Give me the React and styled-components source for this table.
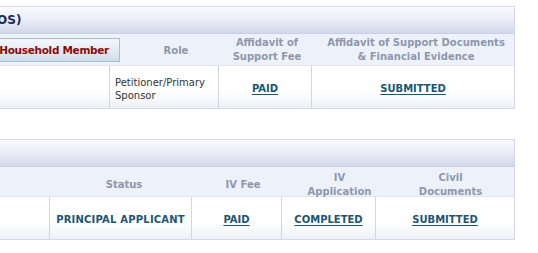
import styled, { createGlobalStyle } from 'styled-components';

const GlobalStyle = createGlobalStyle`
  html, body {
    margin: 0;
    padding: 0;
    background: #ffffff;
    overflow: hidden;
  }
  body {
    font-family: "DejaVu Sans", Verdana, sans-serif;
  }
`;

const Page = styled.div`
  width: 538px;
  height: 253px;
  padding-top: 6px;
  box-sizing: border-box;
  display: flex;
  flex-direction: column;
  gap: 30px;
`;

const Panel = styled.section`
  margin-left: -200px;
  width: 715px;
  border: 1px solid #d3d9ea;
  box-sizing: border-box;
`;

const TitleBar = styled.div`
  height: 26px;
  display: flex;
  align-items: center;
  padding-left: ${(p) => p.$indent}px;
  background: linear-gradient(to bottom, #fbfbfe 0%, #eef0f8 40%, #d2d8ea 100%);
  border-bottom: 1px solid #c8d0e4;
  color: #1c2a58;
  font-size: 12px;
  font-weight: bold;
  white-space: nowrap;
`;

const HeadRow = styled.div`
  display: grid;
  grid-template-columns: ${(p) => p.$cols};
  height: ${(p) => p.$height}px;
  align-items: center;
  background: #edf1fa;
  border-bottom: 1px solid #dfe4f0;
`;

const HeadCell = styled.div`
  text-align: center;
  padding-top: ${(p) => p.$drop || 0}px;
  padding-left: ${(p) => p.$shift || 0}px;
  color: #8e98ac;
  font-size: 10px;
  font-weight: bold;
  line-height: 14px;
`;

const SortButton = styled.button`
  justify-self: end;
  height: 24px;
  padding: 0 10px;
  border: 1px solid #a9bed4;
  background: linear-gradient(to bottom, #f3f7fb 0%, #e2ebf4 55%, #cddceb 100%);
  color: #8b0b0b;
  font-family: inherit;
  font-size: 10.5px;
  letter-spacing: -0.3px;
  font-weight: bold;
  white-space: nowrap;
  cursor: pointer;
`;

const DataRow = styled.div`
  display: grid;
  grid-template-columns: ${(p) => p.$cols};
  height: 42px;
  background: linear-gradient(to bottom, #ffffff 0%, #ffffff 60%, #eef0f7 100%);
`;

const DataCell = styled.div`
  display: flex;
  align-items: center;
  justify-content: ${(p) => (p.$left ? 'flex-start' : 'center')};
  padding-top: 3px;
  padding-left: ${(p) => (p.$left ? 5 : 0)}px;
  border-left: ${(p) => (p.$first ? 'none' : '1px solid #cfd6e8')};
  color: #333333;
  font-size: 10px;
  line-height: 13px;
`;

const StatusLink = styled.a`
  color: #1d5570;
  font-weight: bold;
  font-size: 10px;
  text-decoration: underline;
  text-underline-offset: 2px;
  cursor: pointer;
`;

const StatusText = styled.span`
  color: #1d5570;
  font-weight: bold;
  font-size: 10px;
  letter-spacing: 0.2px;
`;

export default function App() {
  return (
    <>
      <GlobalStyle />
      <Page>
        <Panel>
          <TitleBar $indent={44}>Affidavit of Support (AOS)</TitleBar>
          <HeadRow $cols="319px 112px 70px 1fr" $height={31}>
            <SortButton>Household Member</SortButton>
            <HeadCell $drop={3}>Role</HeadCell>
            <HeadCell $drop={1}>
              Affidavit of
              <br />
              Support Fee
            </HeadCell>
            <HeadCell $drop={1} $shift={16}>
              Affidavit of Support Documents
              <br />
              &amp; Financial Evidence
            </HeadCell>
          </HeadRow>
          <DataRow $cols="308px 109px 93px 1fr">
            <DataCell $first />
            <DataCell $left>
              Petitioner/Primary
              <br />
              Sponsor
            </DataCell>
            <DataCell>
              <StatusLink>PAID</StatusLink>
            </DataCell>
            <DataCell>
              <StatusLink>SUBMITTED</StatusLink>
            </DataCell>
          </DataRow>
        </Panel>

        <Panel>
          <TitleBar $indent={2}>Immigrant Visa (IV)</TitleBar>
          <HeadRow $cols="259px 128px 110px 83px 1fr" $height={29}>
            <HeadCell />
            <HeadCell $drop={4}>Status</HeadCell>
            <HeadCell $drop={4}>IV Fee</HeadCell>
            <HeadCell $drop={4}>
              IV
              <br />
              Application
            </HeadCell>
            <HeadCell $drop={4} $shift={6}>
              Civil
              <br />
              Documents
            </HeadCell>
          </HeadRow>
          <DataRow $cols="248px 142px 90px 94px 1fr">
            <DataCell $first />
            <DataCell>
              <StatusText>PRINCIPAL APPLICANT</StatusText>
            </DataCell>
            <DataCell>
              <StatusLink>PAID</StatusLink>
            </DataCell>
            <DataCell>
              <StatusLink>COMPLETED</StatusLink>
            </DataCell>
            <DataCell>
              <StatusLink>SUBMITTED</StatusLink>
            </DataCell>
          </DataRow>
        </Panel>
      </Page>
    </>
  );
}
